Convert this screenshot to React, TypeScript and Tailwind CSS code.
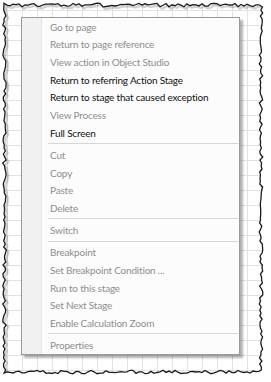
import type { ReactNode } from "react";

type MenuEntry =
  | { kind: "item"; label: string; enabled?: boolean }
  | { kind: "sep" };

const entries: MenuEntry[] = [
  { kind: "item", label: "Go to page" },
  { kind: "item", label: "Return to page reference" },
  { kind: "item", label: "View action in Object Studio" },
  { kind: "item", label: "Return to referring Action Stage", enabled: true },
  { kind: "item", label: "Return to stage that caused exception", enabled: true },
  { kind: "item", label: "View Process" },
  { kind: "item", label: "Full Screen", enabled: true },
  { kind: "sep" },
  { kind: "item", label: "Cut" },
  { kind: "item", label: "Copy" },
  { kind: "item", label: "Paste" },
  { kind: "item", label: "Delete" },
  { kind: "sep" },
  { kind: "item", label: "Switch" },
  { kind: "sep" },
  { kind: "item", label: "Breakpoint" },
  { kind: "item", label: "Set Breakpoint Condition ..." },
  { kind: "item", label: "Run to this stage" },
  { kind: "item", label: "Set Next Stage" },
  { kind: "item", label: "Enable Calculation Zoom" },
  { kind: "sep" },
  { kind: "item", label: "Properties" },
];

// small seeded noise so the torn edge is the same every render
function makeNoise(seed: number) {
  let s = seed;
  return () => {
    s = (s * 16807) % 2147483647;
    return (s / 2147483647) * 2 - 1;
  };
}

function tornPath() {
  const rnd = makeNoise(42);
  const pts: string[] = [];
  for (let x = 4; x <= 261; x += 3) pts.push(`${x},${(5 + rnd() * 1.8).toFixed(1)}`);
  for (let y = 7; y <= 371; y += 3) pts.push(`${(261 + rnd() * 1.8).toFixed(1)},${y}`);
  for (let x = 259; x >= 4; x -= 3) pts.push(`${x},${(372 + rnd() * 1.8).toFixed(1)}`);
  for (let y = 370; y >= 7; y -= 3) pts.push(`${(4.5 + rnd() * 1.8).toFixed(1)},${y}`);
  return "M" + pts.join("L") + "Z";
}

function TornEdge() {
  const edge = tornPath();
  return (
    <svg className="pointer-events-none absolute inset-0" width={271} height={382}>
      <path d={edge} transform="translate(2 2)" fill="none" stroke="#000" strokeOpacity={0.18} strokeWidth={2.5} />
      <path d={`M0 0H271V382H0Z ${edge}`} fill="#fff" fillRule="evenodd" />
      <path d={edge} fill="none" stroke="#1c1c1c" strokeWidth={1.3} />
    </svg>
  );
}

function MenuRow({ children, enabled }: { children: ReactNode; enabled?: boolean }) {
  return (
    <div
      className={
        enabled
          ? "flex h-[17.67px] items-center pl-[28px] text-[#111]"
          : "flex h-[17.67px] items-center pl-[28px] text-[#8e8e8e]"
      }
    >
      {children}
    </div>
  );
}

export default function App() {
  return (
    <div className="relative h-[382px] w-[271px] overflow-hidden bg-white">
      <div className="h-full w-full bg-white bg-[linear-gradient(to_right,#e2e2e2_1px,transparent_1px),linear-gradient(to_bottom,#e2e2e2_1px,transparent_1px)] bg-[size:15px_15px] bg-[position:7px_10px] pl-[21px] pt-[17px]">
        <div className="relative w-[219px] border border-[#9a9a9a] bg-[#fcfcfc] font-['Lato',sans-serif] text-[10px] leading-none tracking-[-0.2px] shadow-[3px_3px_2px_rgba(0,0,0,0.3)]">
          <div className="absolute bottom-0 left-0 top-0 w-[20px] border-r border-[#e4e4e4] bg-[#f1f1f1]" />
          <div className="relative">
            {entries.map((entry, index) =>
              entry.kind === "sep" ? (
                <div key={index} className="flex h-[4.5px] items-center pl-[26px] pr-[1px]">
                  <div className="h-px w-full bg-[#d7d7d7]" />
                </div>
              ) : (
                <MenuRow key={index} enabled={entry.enabled}>
                  {entry.label}
                </MenuRow>
              ),
            )}
          </div>
        </div>
      </div>
      <TornEdge />
    </div>
  );
}
